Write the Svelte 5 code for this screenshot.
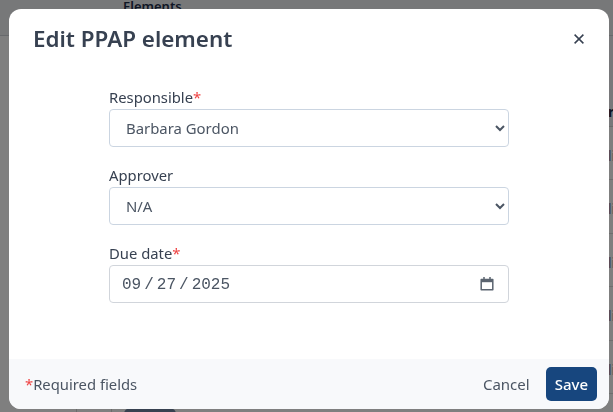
<script lang="ts">
  let responsible = 'Barbara Gordon';
  let approver = 'N/A';
  let dueDate = '2025-09-27';

  const rows = [1, 2, 3, 4, 5];
</script>

<div class="page">
  <div class="tabs"><span class="tab">Elements</span></div>
  <div class="table-head"><span>r</span></div>
  {#each rows as row}
    <div class="table-row"><span>li</span></div>
  {/each}
  <div class="last-row">
    <i class="cell"></i>
    <i class="cell"></i>
    <b class="pill"></b>
  </div>
</div>

<div class="overlay">
  <div class="modal">
    <header class="modal-header">
      <h2>Edit PPAP element</h2>
      <button class="close" aria-label="Close">
        <svg width="16" height="16" viewBox="0 0 16 16">
          <path d="M3.6 3.6l8.8 8.8M12.4 3.6l-8.8 8.8" stroke="#374151" stroke-width="1.5" fill="none" />
        </svg>
      </button>
    </header>

    <div class="modal-body">
      <div class="form">
        <div class="field">
          <label for="resp">Responsible<span class="req">*</span></label>
          <select id="resp" bind:value={responsible}>
            <option>Barbara Gordon</option>
          </select>
        </div>
        <div class="field">
          <label for="appr">Approver</label>
          <select id="appr" bind:value={approver}>
            <option>N/A</option>
          </select>
        </div>
        <div class="field">
          <label for="due">Due date<span class="req">*</span></label>
          <div class="date-wrap">
            <input id="due" type="date" bind:value={dueDate} />
            <svg class="cal" width="16" height="16" viewBox="0 0 16 16" aria-hidden="true">
              <path d="M2.2 3.4h11.6v10.4H2.2z" fill="none" stroke="#5b6470" stroke-width="1.5" stroke-linejoin="round" />
              <path d="M2.2 3h11.6v3.2H2.2z" fill="#5b6470" />
              <path d="M5 1v3M11 1v3" stroke="#5b6470" stroke-width="1.5" fill="none" />
            </svg>
          </div>
        </div>
      </div>
    </div>

    <footer class="modal-footer">
      <span class="note"><span class="req">*</span>Required fields</span>
      <div class="actions">
        <button class="cancel">Cancel</button>
        <button class="save">Save</button>
      </div>
    </footer>
  </div>
</div>

<style>
  :global(body) {
    margin: 0;
    overflow: hidden;
    font-family: "Noto Sans", sans-serif;
  }

  .page {
    width: 613px;
    height: 412px;
    overflow: hidden;
    background: #fff;
  }

  .tabs {
    height: 36px;
    box-sizing: border-box;
    background: #eef0f3;
    border-bottom: 1px solid #cfd3d8;
    padding-left: 123px;
  }

  .tab {
    display: block;
    font-size: 13px;
    font-weight: 600;
    line-height: 13px;
    color: #1f2f4a;
  }

  /* table starts past the left strip, only its right end shows */
  .table-head {
    height: 91px;
    margin-left: 20px;
    box-sizing: border-box;
    background: #f0f1f4;
    border-bottom: 1px solid #d6d6d6;
    padding: 66px 0 0 588px;
    font-size: 14px;
    line-height: 20px;
    font-weight: 700;
    color: #1e2b45;
    white-space: nowrap;
  }

  .table-row {
    height: 53.4px;
    margin-left: 20px;
    box-sizing: border-box;
    border-bottom: 1px solid #dcdcdc;
    padding: 19px 0 0 588px;
    font-size: 14px;
    line-height: 20px;
    color: #7d7fa8;
    white-space: nowrap;
  }

  .last-row {
    position: relative;
    height: 20px;
  }

  .cell {
    display: inline-block;
    width: 1px;
    height: 20px;
    background: #d6d6d6;
    margin-left: 76px;
  }

  .cell + .cell {
    margin-left: 30px;
  }

  .pill {
    position: absolute;
    left: 124px;
    top: 14px;
    width: 52px;
    height: 18px;
    border-radius: 6px;
    background: #6e82a0;
  }

  .overlay {
    position: fixed;
    inset: 0;
    background: rgba(0, 0, 0, 0.5);
  }

  .modal {
    position: absolute;
    left: 9px;
    top: 9px;
    width: 600px;
    height: 400px;
    background: #fff;
    border-radius: 12px;
    display: flex;
    flex-direction: column;
    overflow: hidden;
  }

  .modal-header {
    display: flex;
    align-items: center;
    justify-content: space-between;
    padding: 14px 22px 0 24px;
    height: 46px;
    box-sizing: border-box;
  }

  h2 {
    margin: -1px 0 0;
    font-size: 22.4px;
    font-weight: 600;
    color: #374151;
    line-height: 30px;
  }

  .close {
    background: none;
    border: 0;
    padding: 0;
    width: 16px;
    height: 16px;
    display: flex;
  }

  .modal-body {
    flex: 1;
    padding: 32px 100px 0;
  }

  .form {
    display: flex;
    flex-direction: column;
    gap: 18px;
  }

  .field {
    display: flex;
    flex-direction: column;
    gap: 2px;
  }

  label {
    font-size: 14.8px;
    line-height: 20px;
    color: #374151;
  }

  .req {
    color: #ef4444;
  }

  select, input {
    height: 38px;
    width: 400px;
    box-sizing: border-box;
    border: 1px solid #cbd5e1;
    border-radius: 4px;
    background: #fff;
    font-family: inherit;
    font-size: 14.9px;
    color: #4b5563;
    padding: 0 12px;
  }

  .date-wrap {
    position: relative;
    display: flex;
  }

  input {
    border-color: #d1d5db;
    font-family: "Liberation Mono", monospace;
    font-size: 16px;
    color: #4b5563;
    padding: 2px 12px 0 11px;
  }

  input::-webkit-calendar-picker-indicator {
    opacity: 0;
  }

  input::-webkit-datetime-edit-text {
    padding: 0 2px;
  }

  .cal {
    position: absolute;
    right: 14px;
    top: 11px;
    pointer-events: none;
  }

  .modal-footer {
    height: 50px;
    background: #f8f9fb;
    display: flex;
    align-items: center;
    justify-content: space-between;
    padding: 0 12px 0 16px;
  }

  .note {
    font-size: 14.8px;
    color: #4b5563;
    margin-top: -1px;
  }

  .actions {
    display: flex;
    align-items: center;
    gap: 7px;
  }

  .actions button {
    font-family: inherit;
    font-size: 15px;
    height: 34px;
    padding: 0 9px;
    border-radius: 5px;
    border: 0;
  }

  .cancel {
    background: none;
    color: #4b5563;
  }

  .save {
    background: #17467e;
    color: #fff;
    font-weight: 500;
  }
</style>
